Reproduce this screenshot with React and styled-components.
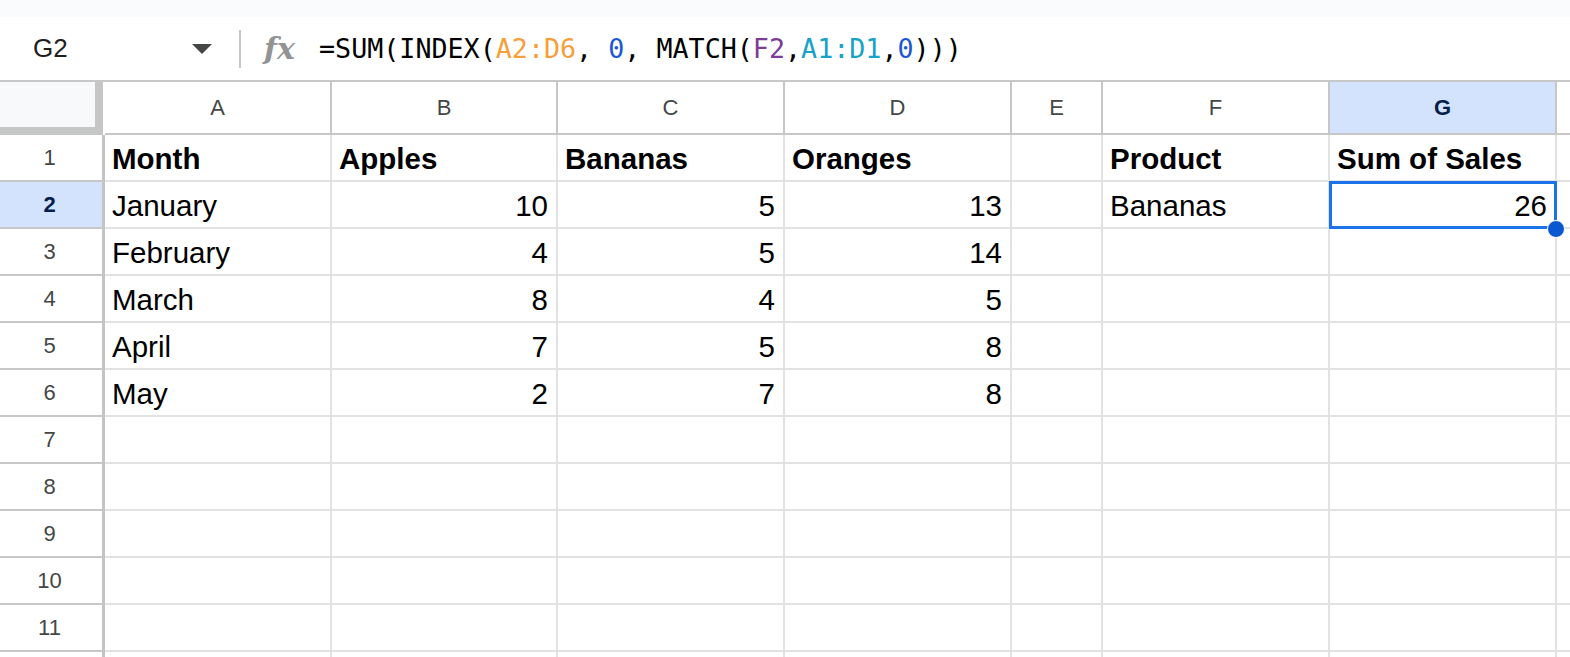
import styled, { createGlobalStyle } from 'styled-components';

const GlobalStyle = createGlobalStyle`
  html, body {
    margin: 0;
    padding: 0;
    background: #fff;
    overflow: hidden;
  }
  * {
    box-sizing: border-box;
  }
`;

const ROW_HEADER_WIDTH = 105;

const columns = [
  { key: 'A', width: 227 },
  { key: 'B', width: 226 },
  { key: 'C', width: 227 },
  { key: 'D', width: 227 },
  { key: 'E', width: 91 },
  { key: 'F', width: 227 },
  { key: 'G', width: 227 },
  { key: 'H', width: null },
];

// each row: values for A..G, numbers are right aligned
const rows = [
  ['Month', 'Apples', 'Bananas', 'Oranges', '', 'Product', 'Sum of Sales'],
  ['January', 10, 5, 13, '', 'Bananas', 26],
  ['February', 4, 5, 14],
  ['March', 8, 4, 5],
  ['April', 7, 5, 8],
  ['May', 2, 7, 8],
  [],
  [],
  [],
  [],
  [],
];

const selected = { row: 2, col: 'G' };

const template = [
  `${ROW_HEADER_WIDTH}px`,
  ...columns.map((c) => (c.width ? `${c.width}px` : '1fr')),
].join(' ');

export default function App() {
  return (
    <Page>
      <GlobalStyle />
      <TopStrip />
      <FormulaBar>
        <NameBox>
          <span>G2</span>
          <Caret />
        </NameBox>
        <Divider />
        <Fx>fx</Fx>
        <Formula>
          =SUM(INDEX(<Ref color="#f6a03b">A2:D6</Ref>, <Ref color="#1a57d6">0</Ref>, MATCH(
          <Ref color="#7d3c98">F2</Ref>,<Ref color="#17a2c9">A1:D1</Ref>,
          <Ref color="#1a57d6">0</Ref>)))
        </Formula>
      </FormulaBar>

      <Sheet $template={template}>
        <Corner />
        {columns.map((c) => (
          <ColHeader key={c.key} $active={c.key === selected.col}>
            {c.key !== 'H' ? c.key : ''}
          </ColHeader>
        ))}

        {rows.map((row, i) => {
          const rowNum = i + 1;
          return [
            <RowHeader key={`h${rowNum}`} $active={rowNum === selected.row}>
              {rowNum}
            </RowHeader>,
            ...columns.map((c, j) => {
              const value = row[j];
              const isSel = rowNum === selected.row && c.key === selected.col;
              return (
                <Cell
                  key={`${c.key}${rowNum}`}
                  $bold={rowNum === 1}
                  $number={typeof value === 'number'}
                >
                  {value}
                  {isSel && (
                    <>
                      <Selection />
                      <Handle />
                    </>
                  )}
                </Cell>
              );
            }),
          ];
        })}

        {/* row 12 only peeks in at the bottom edge */}
        <RowHeader />
        {columns.map((c) => (
          <Cell key={`${c.key}12`} />
        ))}
      </Sheet>
    </Page>
  );
}

const Page = styled.div`
  width: 1570px;
  height: 657px;
  overflow: hidden;
  display: flex;
  flex-direction: column;
  background: #fff;
  font-family: 'Liberation Sans', Arial, sans-serif;
`;

const TopStrip = styled.div`
  height: 17px;
  background: #f9fbfd;
  flex-shrink: 0;
`;

const FormulaBar = styled.div`
  height: 63px;
  flex-shrink: 0;
  display: flex;
  align-items: center;
  background: #fff;
`;

const NameBox = styled.div`
  width: 239px;
  padding: 0 27px 0 33px;
  display: flex;
  align-items: center;
  justify-content: space-between;
  font-size: 26px;
  color: #1f1f1f;
`;

const Caret = styled.div`
  width: 0;
  height: 0;
  border-left: 10px solid transparent;
  border-right: 10px solid transparent;
  border-top: 10px solid #444746;
`;

const Divider = styled.div`
  width: 2px;
  height: 38px;
  background: #c7c7c7;
`;

const Fx = styled.span`
  margin-left: 23px;
  width: 34px;
  font-family: 'DejaVu Serif', 'Liberation Serif', serif;
  font-style: italic;
  font-weight: bold;
  font-size: 30px;
  color: #939393;
  line-height: 1;
`;

const Formula = styled.div`
  margin-left: 21px;
  font-family: 'DejaVu Sans Mono', 'Liberation Mono', monospace;
  font-size: 26.7px;
  color: #000;
  white-space: pre;
  display: flex;
`;

const Ref = styled.span`
  color: ${(p) => p.color};
`;

const Sheet = styled.div`
  display: grid;
  grid-template-columns: ${(p) => p.$template};
  grid-template-rows: 53px;
  grid-auto-rows: 47px;
  border-top: 2px solid #c7c7c7;
`;

const Corner = styled.div`
  background: #f8f9fa;
  border-right: 8px solid #c4c7c5;
  border-bottom: 8px solid #c4c7c5;
  margin-right: 2px;
`;

const ColHeader = styled.div`
  display: flex;
  align-items: center;
  justify-content: center;
  font-size: 22px;
  color: ${(p) => (p.$active ? '#041e49' : '#444746')};
  font-weight: ${(p) => (p.$active ? 'bold' : 'normal')};
  background: ${(p) => (p.$active ? '#d3e3fd' : '#fff')};
  border-right: 2px solid #c7c7c7;
  border-bottom: 2px solid #c7c7c7;
`;

const RowHeader = styled.div`
  display: flex;
  align-items: center;
  justify-content: center;
  padding-right: 3px;
  font-size: 22px;
  color: ${(p) => (p.$active ? '#041e49' : '#444746')};
  font-weight: ${(p) => (p.$active ? 'bold' : 'normal')};
  background: ${(p) => (p.$active ? '#d3e3fd' : '#fff')};
  border-right: 3px solid #c4c4c4;
  border-bottom: 2px solid #c7c7c7;
`;

const Cell = styled.div`
  position: relative;
  display: flex;
  align-items: center;
  justify-content: ${(p) => (p.$number ? 'flex-end' : 'flex-start')};
  padding: 3px 8px 0 7px;
  font-size: 29.5px;
  font-weight: ${(p) => (p.$bold ? 'bold' : 'normal')};
  color: #000;
  white-space: nowrap;
  border-right: 2px solid #e2e2e2;
  border-bottom: 2px solid #e2e2e2;
`;

const Selection = styled.div`
  position: absolute;
  top: -1px;
  left: -1px;
  right: -2px;
  bottom: -2px;
  border: 3px solid #1a73e8;
  z-index: 2;
  pointer-events: none;
`;

const Handle = styled.div`
  position: absolute;
  right: -10px;
  bottom: -11px;
  width: 18px;
  height: 18px;
  border-radius: 50%;
  background: #0b57d0;
  border: 1.5px solid #fff;
  z-index: 3;
`;
